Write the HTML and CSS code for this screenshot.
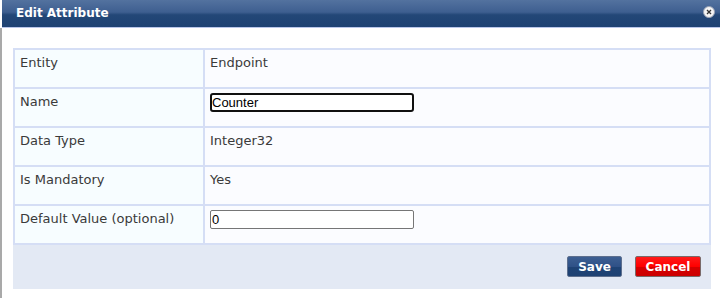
FILE: index.html
```html
<!DOCTYPE html>
<html>
<head>
<meta charset="utf-8">
<link rel="stylesheet" href="styles.css">
</head>
<body>
<div class="page">
  <div class="edge"></div>
  <div class="dialog">
    <div class="titlebar">
      <span class="title">Edit Attribute</span>
      <span class="close">
        <svg width="12" height="12" viewBox="0 0 12 12"><circle cx="6" cy="6" r="5.5" fill="#f4f4f4" stroke="#9aa3b5" stroke-width="1"/><path d="M4 4L8 8M8 4L4 8" stroke="#333" stroke-width="1.3"/></svg>
      </span>
    </div>
    <div class="body">
      <table class="grid">
        <tr><td class="lbl">Entity</td><td class="val">Endpoint</td></tr>
        <tr><td class="lbl">Name</td><td class="val"><input class="inp focus" type="text" value="Counter"></td></tr>
        <tr><td class="lbl">Data Type</td><td class="val">Integer32</td></tr>
        <tr><td class="lbl">Is Mandatory</td><td class="val">Yes</td></tr>
        <tr><td class="lbl">Default Value (optional)</td><td class="val"><input class="inp" type="text" value="0"></td></tr>
      </table>
      <div class="footer">
        <button class="btn save">Save</button>
        <button class="btn cancel">Cancel</button>
      </div>
    </div>
  </div>
</div>
</body>
</html>
```

FILE: styles.css
```css
html, body {
  margin: 0;
  padding: 0;
  background: #ffffff;
}
.page {
  display: flex;
  width: 720px;
  height: 298px;
  overflow: hidden;
}
.edge {
  width: 2px;
  flex: none;
  background: linear-gradient(to bottom, #ffffff 0, #ffffff 28px, #a9a9a9 28px, #a9a9a9 100%);
}
.dialog {
  flex: 1;
  display: flex;
  flex-direction: column;
  background: #ffffff;
}
.titlebar {
  height: 28px;
  box-sizing: border-box;
  border-bottom: 1px solid #b9c6ea;
  background: linear-gradient(to bottom, #53729f 0%, #3e5f90 45%, #234777 55%, #1e4273 100%);
  display: flex;
  align-items: center;
  justify-content: space-between;
  padding: 0 5px 2px 14px;
}
.title {
  font-family: "DejaVu Sans", Verdana, sans-serif;
  font-weight: bold;
  font-size: 12px;
  color: #ffffff;
}
.close {
  display: flex;
  align-self: flex-start;
  margin-top: 6px;
}
.body {
  padding: 20px 7px 0 11px;
}
.grid {
  width: 698px;
  border-collapse: collapse;
  font-family: "DejaVu Sans", Verdana, sans-serif;
  font-size: 13px;
  color: #3a3a3a;
}
.grid td {
  border: 2px solid #d5def5;
  height: 39px;
  box-sizing: border-box;
  vertical-align: top;
  padding: 5px 5px;
}
.grid td.lbl {
  width: 190px;
  background: #f7fdff;
}
.grid td.val {
  background: #fbfcff;
}
.inp {
  display: block;
  margin: -1px 0 0 0;
  width: 204px;
  height: 19px;
  box-sizing: border-box;
  border: 1px solid #767676;
  border-radius: 2px;
  padding: 0 1px;
  font-family: "Liberation Sans", Arial, sans-serif;
  font-size: 13px;
  color: #000000;
  background: #ffffff;
}
.inp.focus {
  border: 2px solid #101010;
  border-radius: 3px;
  padding: 0;
}
.footer {
  height: 44px;
  background: #e3e9f4;
  display: flex;
  justify-content: flex-end;
  align-items: flex-start;
  gap: 13px;
  padding: 11px 10px 0 0;
  box-sizing: border-box;
  width: 698px;
}
.btn {
  height: 21px;
  border-radius: 2px;
  font-family: "DejaVu Sans", Verdana, sans-serif;
  font-weight: bold;
  font-size: 12px;
  color: #ffffff;
  padding: 0 8px;
  cursor: pointer;
}
.save {
  width: 55px;
  border: 1px solid #5d6f8e;
  background: linear-gradient(to bottom, #3d5f92 0%, #2f5187 50%, #1f4375 51%, #1e4273 100%);
}
.cancel {
  width: 66px;
  border: 1px solid #7a6a6a;
  background: linear-gradient(to bottom, #ff1a1a 0%, #ff0000 50%, #d60000 51%, #cc0000 100%);
}
```
